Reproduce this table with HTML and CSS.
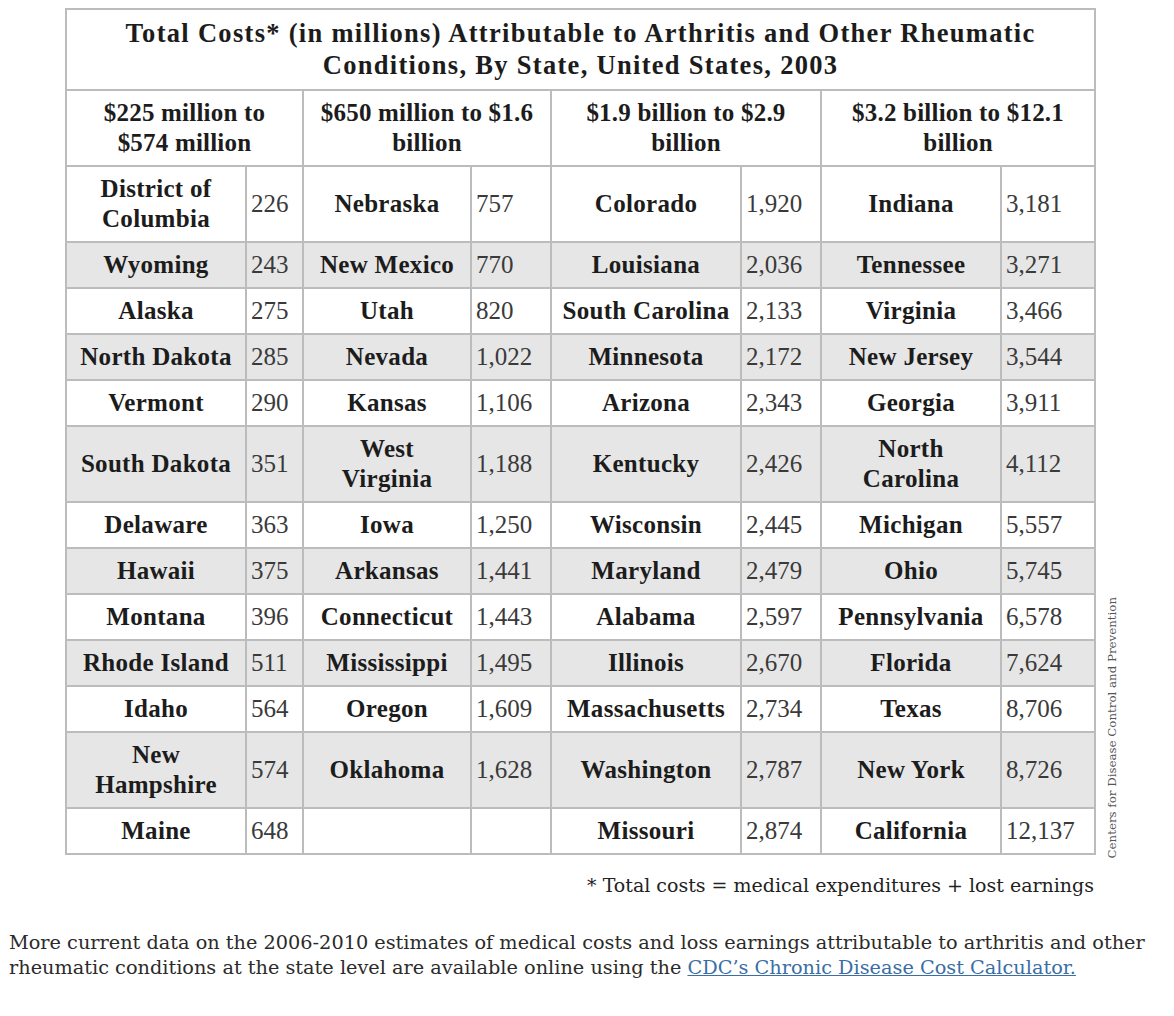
FILE: index.html
```html
<!DOCTYPE html>
<html lang="en">
<head>
<meta charset="utf-8">
<title>Total Costs Attributable to Arthritis by State</title>
<link rel="stylesheet" href="styles.css">
</head>
<body>
<div class="figure">
  <div class="figure-row">
    <table class="costs">
      <colgroup>
        <col class="c-name1"><col class="c-num1">
        <col class="c-name2"><col class="c-num2">
        <col class="c-name3"><col class="c-num3">
        <col class="c-name4"><col class="c-num4">
      </colgroup>
      <thead>
        <tr><th class="title" colspan="8">Total Costs* (in millions) Attributable to Arthritis and Other Rheumatic<br>Conditions, By State, United States, 2003</th></tr>
        <tr class="heads">
          <th colspan="2">$225 million to<br>$574 million</th>
          <th colspan="2">$650 million to $1.6<br>billion</th>
          <th colspan="2">$1.9 billion to $2.9<br>billion</th>
          <th colspan="2">$3.2 billion to $12.1<br>billion</th>
        </tr>
      </thead>
      <tbody>
        <tr class="tall"><td class="n">District of<br>Columbia</td><td class="v">226</td><td class="n">Nebraska</td><td class="v">757</td><td class="n">Colorado</td><td class="v">1,920</td><td class="n">Indiana</td><td class="v">3,181</td></tr>
        <tr class="alt"><td class="n">Wyoming</td><td class="v">243</td><td class="n">New Mexico</td><td class="v">770</td><td class="n">Louisiana</td><td class="v">2,036</td><td class="n">Tennessee</td><td class="v">3,271</td></tr>
        <tr><td class="n">Alaska</td><td class="v">275</td><td class="n">Utah</td><td class="v">820</td><td class="n">South Carolina</td><td class="v">2,133</td><td class="n">Virginia</td><td class="v">3,466</td></tr>
        <tr class="alt"><td class="n">North Dakota</td><td class="v">285</td><td class="n">Nevada</td><td class="v">1,022</td><td class="n">Minnesota</td><td class="v">2,172</td><td class="n">New Jersey</td><td class="v">3,544</td></tr>
        <tr><td class="n">Vermont</td><td class="v">290</td><td class="n">Kansas</td><td class="v">1,106</td><td class="n">Arizona</td><td class="v">2,343</td><td class="n">Georgia</td><td class="v">3,911</td></tr>
        <tr class="alt tall"><td class="n">South Dakota</td><td class="v">351</td><td class="n">West<br>Virginia</td><td class="v">1,188</td><td class="n">Kentucky</td><td class="v">2,426</td><td class="n">North<br>Carolina</td><td class="v">4,112</td></tr>
        <tr><td class="n">Delaware</td><td class="v">363</td><td class="n">Iowa</td><td class="v">1,250</td><td class="n">Wisconsin</td><td class="v">2,445</td><td class="n">Michigan</td><td class="v">5,557</td></tr>
        <tr class="alt"><td class="n">Hawaii</td><td class="v">375</td><td class="n">Arkansas</td><td class="v">1,441</td><td class="n">Maryland</td><td class="v">2,479</td><td class="n">Ohio</td><td class="v">5,745</td></tr>
        <tr><td class="n">Montana</td><td class="v">396</td><td class="n">Connecticut</td><td class="v">1,443</td><td class="n">Alabama</td><td class="v">2,597</td><td class="n">Pennsylvania</td><td class="v">6,578</td></tr>
        <tr class="alt"><td class="n">Rhode Island</td><td class="v">511</td><td class="n">Mississippi</td><td class="v">1,495</td><td class="n">Illinois</td><td class="v">2,670</td><td class="n">Florida</td><td class="v">7,624</td></tr>
        <tr><td class="n">Idaho</td><td class="v">564</td><td class="n">Oregon</td><td class="v">1,609</td><td class="n">Massachusetts</td><td class="v">2,734</td><td class="n">Texas</td><td class="v">8,706</td></tr>
        <tr class="alt tall"><td class="n">New<br>Hampshire</td><td class="v">574</td><td class="n">Oklahoma</td><td class="v">1,628</td><td class="n">Washington</td><td class="v">2,787</td><td class="n">New York</td><td class="v">8,726</td></tr>
        <tr><td class="n">Maine</td><td class="v">648</td><td class="n"></td><td class="v"></td><td class="n">Missouri</td><td class="v">2,874</td><td class="n">California</td><td class="v">12,137</td></tr>
      </tbody>
    </table>
    <div class="credit">Centers for Disease Control and Prevention</div>
  </div>
  <p class="caption">* Total costs = medical expenditures + lost earnings</p>
</div>
<p class="more">More current data on the 2006-2010 estimates of medical costs and loss earnings attributable to arthritis and other rheumatic conditions at the state level are available online using the <a href="#">CDC’s Chronic Disease Cost Calculator.</a></p>
</body>
</html>
```

FILE: styles.css
```css
html, body {
  margin: 0;
  padding: 0;
  background: #ffffff;
}

.figure {
  padding: 8px 0 0 65px;
  width: 1070px;
}

.figure-row {
  display: flex;
  align-items: flex-end;
  gap: 9px;
}

.costs {
  border-collapse: collapse;
  table-layout: fixed;
  width: 1029px;
  font-family: "Liberation Serif", "Times New Roman", serif;
  color: #1c1c1c;
}

.c-name1 { width: 180px; }
.c-num1 { width: 57px; }
.c-name2 { width: 168px; }
.c-num2 { width: 80px; }
.c-name3 { width: 190px; }
.c-num3 { width: 80px; }
.c-name4 { width: 180px; }
.c-num4 { width: 94px; }

.costs th,
.costs td {
  border: 2px solid #bcbcbc;
  padding: 7px 0;
  line-height: 30px;
  font-size: 25px;
  vertical-align: middle;
}

.costs th.title {
  font-size: 26.5px;
  line-height: 32px;
  padding: 7px 0 8px;
  font-weight: bold;
  letter-spacing: 1.3px;
  text-align: center;
}

.heads th {
  font-weight: bold;
  text-align: center;
  padding: 7px 0;
  letter-spacing: 0.2px;
}

.costs td.n {
  font-weight: bold;
  text-align: center;
  letter-spacing: 0.3px;
  white-space: nowrap;
}

.costs td.v {
  text-align: left;
  padding-left: 4px;
  color: #3a3a3a;
}

.costs tr.alt td {
  background: #e6e6e6;
}

.credit {
  writing-mode: vertical-rl;
  transform: rotate(180deg);
  font-family: "DejaVu Serif", serif;
  font-size: 11.8px;
  line-height: 15px;
  color: #555555;
  white-space: nowrap;
  margin-bottom: -3px;
}

.caption {
  margin: 17px 0 0;
  padding-right: 5px;
  width: 1029px;
  text-align: right;
  font-family: "DejaVu Serif", serif;
  font-size: 19px;
  line-height: 26px;
  color: #222222;
}

.more {
  margin: 32px 0 0 9px;
  width: 1160px;
  font-family: "DejaVu Serif", serif;
  font-size: 19.3px;
  line-height: 25px;
  color: #2b2b2b;
}

.more a {
  color: #3a6ea5;
  text-decoration: underline;
}
```
